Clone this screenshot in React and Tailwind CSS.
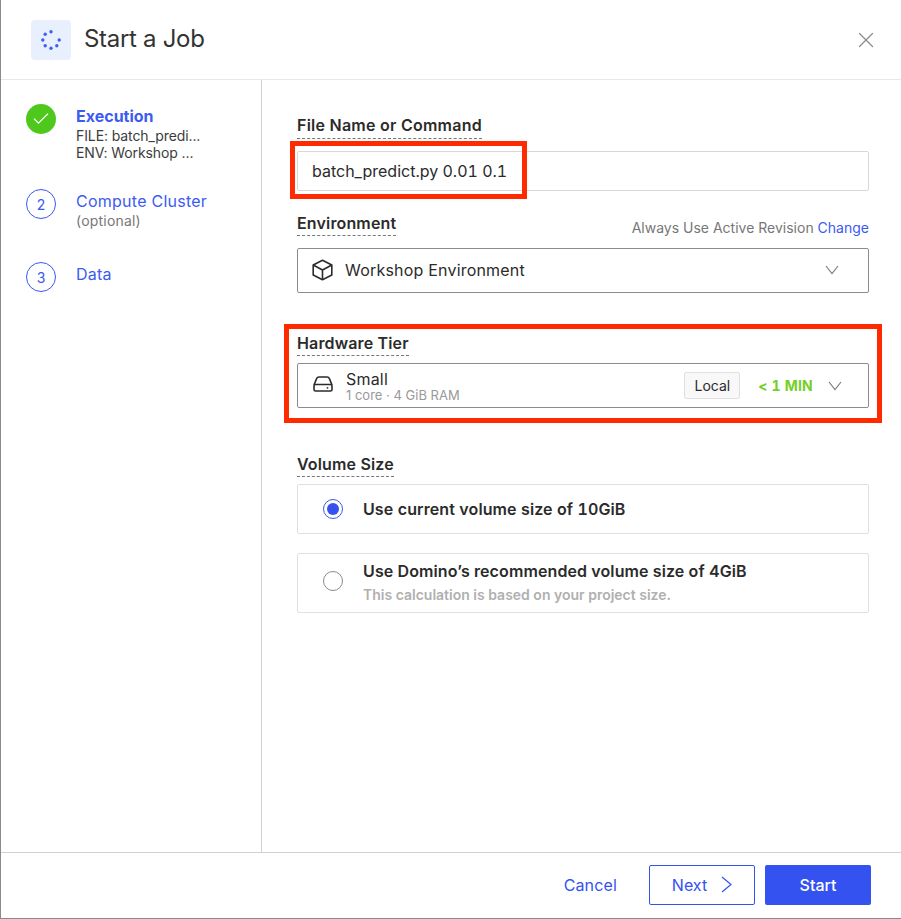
import { Check, X } from "lucide-react";

function FieldLabel({ children, className = "pb-[2px] tracking-[0.15px]" }) {
  return (
    <span className={"block w-fit border-b border-dashed border-[#777] text-[16px] leading-[20px] font-semibold text-[#2b2b2b] " + className}>
      {children}
    </span>
  );
}

function Chevron({ className }) {
  return (
    <svg width="14" height="10" viewBox="0 0 14 10" fill="none" stroke="#777" strokeWidth="1.1" className={className}>
      <path d="M1 1 L7 8.5 L13 1" />
    </svg>
  );
}

function Step({ num, done, title, className = "", children }) {
  return (
    <div className={"flex gap-[20px] " + className}>
      {done ? (
        <div className="w-[30px] h-[30px] rounded-full bg-[#4fc81e] flex items-center justify-center shrink-0">
          <Check size={20} strokeWidth={1.4} className="text-white" />
        </div>
      ) : (
        <div className="w-[30px] h-[30px] rounded-full border border-[#3a57f0] text-[#3a57f0] text-[14px] flex items-center justify-center shrink-0">
          {num}
        </div>
      )}
      <div className="min-w-0 pt-[2px]">
        <div className={"text-[16px] leading-[20px] tracking-[0.25px] text-[#3b5bf2] " + (done ? "font-bold tracking-[0px]" : "")}>{title}</div>
        {children}
      </div>
    </div>
  );
}

export default function App() {
  const dots = [0, 45, 90, 135, 180, 225, 270];
  return (
    <div className="relative w-[901px] h-[919px] bg-white flex flex-col border-l border-b border-[#8a8a8a] overflow-hidden font-['Inter',sans-serif] text-[#2b2b2b]">
      <header className="h-[80px] shrink-0 border-b border-[#e8e8e8] flex items-center pl-[30px] pr-[22px]">
        <div className="w-[40px] h-[40px] rounded-[4px] bg-[#e8f0fd] flex items-center justify-center">
          <svg width="22" height="22" viewBox="0 0 22 22">
            {dots.map((a) => (
              <circle
                key={a}
                cx={11 + 8.2 * Math.cos((a * Math.PI) / 180)}
                cy={11 + 8.2 * Math.sin((a * Math.PI) / 180)}
                r="1.7"
                fill="#3f5ff2"
              />
            ))}
          </svg>
        </div>
        <h1 className="ml-[13px] mb-[2px] text-[24px] leading-[30px] tracking-[-0.3px] text-[#333]">Start a Job</h1>
        <X size={26} strokeWidth={1.2} className="ml-auto text-[#8c8c8c]" />
      </header>

      <div className="flex-1 flex min-h-0">
        <aside className="w-[261px] shrink-0 border-r border-[#d0d0d0] pt-[24px] pl-[25px]">
          <Step done title="Execution" className="h-[85px]">
            <div className="mt-[1px] text-[14px] leading-[18px] tracking-[-0.1px] text-[#3c3c3c]">FILE: batch_predi...</div>
            <div className="mt-[-1px] text-[14px] leading-[18px] tracking-[-0.1px] text-[#3c3c3c]">ENV: Workshop ...</div>
          </Step>
          <Step num={2} title="Compute Cluster" className="h-[73px]">
            <div className="text-[14px] leading-[20px] tracking-[0.2px] text-[#777]">(optional)</div>
          </Step>
          <Step num={3} title="Data" />
        </aside>

        <main className="flex-1 pl-[35px] pr-[32px] pt-[35px]">
          <FieldLabel className="pb-[3px] tracking-[0.25px]">File Name or Command</FieldLabel>
          <div className="h-[40px] mt-[12px] border border-[#d8d8d8] rounded-[2px] flex items-center pl-[14px] pb-[1px] text-[16px] tabular-nums">
            batch_predict.py 0.01 0.1
          </div>

          <div className="flex items-start justify-between mt-[22px]">
            <FieldLabel>Environment</FieldLabel>
            <div className="text-[14px] leading-[20px] mt-[5px] mb-[-2px] text-[#777]">
              Always Use Active Revision <span className="text-[#3b5bf2]">Change</span>
            </div>
          </div>
          <div className="h-[45px] mt-[12px] border border-[#8c8c8c] rounded-[2px] flex items-center pl-[14px] pr-[29px] pb-[2px]">
            <svg width="21" height="22" viewBox="0 0 21 22" fill="none" stroke="#2b2b2b" strokeWidth="1.6" strokeLinejoin="round">
              <path d="M10.5 1.2 L19.8 6 V16 L10.5 20.8 L1.2 16 V6 Z" />
              <path d="M1.2 6 L10.5 11 L19.8 6 M10.5 11 V20.8" />
            </svg>
            <span className="ml-[12px] text-[16px] tracking-[0.2px]">Workshop Environment</span>
            <Chevron className="ml-auto" />
          </div>

          <div className="mt-[40px]">
            <FieldLabel>Hardware Tier</FieldLabel>
          </div>
          <div className="h-[45px] mt-[7px] border border-[#8c8c8c] rounded-[2px] flex items-center pl-[15px] pr-[26px]">
            <svg width="20" height="16" viewBox="0 0 20 16" fill="none" stroke="#2b2b2b" strokeWidth="1.6" strokeLinejoin="round" className="mb-[3px]">
              <path d="M1 9 L3.6 2.6 Q4.2 1 6 1 H14 Q15.8 1 16.4 2.6 L19 9" />
              <rect x="1" y="8.5" width="18" height="6.5" rx="1.6" />
              <circle cx="14.5" cy="11.8" r="0.9" fill="#2b2b2b" stroke="none" />
            </svg>
            <div className="ml-[13px] mt-[1px]">
              <div className="text-[16px] leading-[18px] tracking-[0.2px]">Small</div>
              <div className="text-[13px] leading-[14px] text-[#999]">1 core · 4 GiB RAM</div>
            </div>
            <span className="ml-auto w-[56px] h-[27px] flex items-center justify-center bg-[#f8f8f8] border border-[#e0e0e0] rounded-[2px] text-[14px]">
              Local
            </span>
            <span className="ml-[18px] text-[14px] font-bold tracking-[0.2px] tabular-nums text-[#74cf27]">&lt; 1 MIN</span>
            <Chevron className="ml-[15px]" />
          </div>

          <div className="mt-[46px]">
            <FieldLabel>Volume Size</FieldLabel>
          </div>
          <div className="h-[50px] mt-[7px] border border-[#e0e0e0] rounded-[2px] flex items-center pl-[25px]">
            <span className="w-[20px] h-[20px] rounded-full border border-[#3b5bf2] flex items-center justify-center">
              <span className="w-[12px] h-[12px] rounded-full bg-[#3352f0]" />
            </span>
            <span className="ml-[20px] text-[16px] font-semibold tracking-[0.1px] tabular-nums">Use current volume size of 10GiB</span>
          </div>
          <div className="h-[60px] mt-[19px] border border-[#e0e0e0] rounded-[2px] flex items-center pl-[25px]">
            <span className="w-[20px] h-[20px] rounded-full border border-[#8c8c8c] mb-[4px]" />
            <div className="ml-[20px]">
              <div className="text-[16px] leading-[22px] font-semibold tracking-[0.11px] mt-[-2px]">Use Domino’s recommended volume size of 4GiB</div>
              <div className="text-[14px] leading-[18px] mt-[4px] font-semibold text-[#b0b0b0]">
                This calculation is based on your project size.
              </div>
            </div>
          </div>
        </main>
      </div>

      <footer className="h-[66px] shrink-0 border-t border-[#d0d0d0] flex items-center justify-end pr-[30px] pb-[2px]">
        <span className="text-[16px] tracking-[0.15px] text-[#3352f0]">Cancel</span>
        <button className="ml-[32px] w-[106px] h-[40px] border border-[#3352f0] rounded-[2px] flex items-center justify-center gap-[14px] text-[16px] text-[#3352f0]">
          Next
          <svg width="11" height="17" viewBox="0 0 11 17" fill="none" stroke="#3352f0" strokeWidth="1.2">
            <path d="M1 1 L10 8.5 L1 16" />
          </svg>
        </button>
        <button className="ml-[10px] w-[106px] h-[40px] bg-[#3352f0] rounded-[2px] text-[16px] font-medium text-white">
          Start
        </button>
      </footer>

      <div className="absolute left-[289px] top-[141px] w-[237px] h-[58px] border-[5px] border-[#ff2a00]" />
      <div className="absolute left-[283px] top-[324px] w-[598px] h-[99px] border-[5px] border-[#ff2a00]" />
    </div>
  );
}
